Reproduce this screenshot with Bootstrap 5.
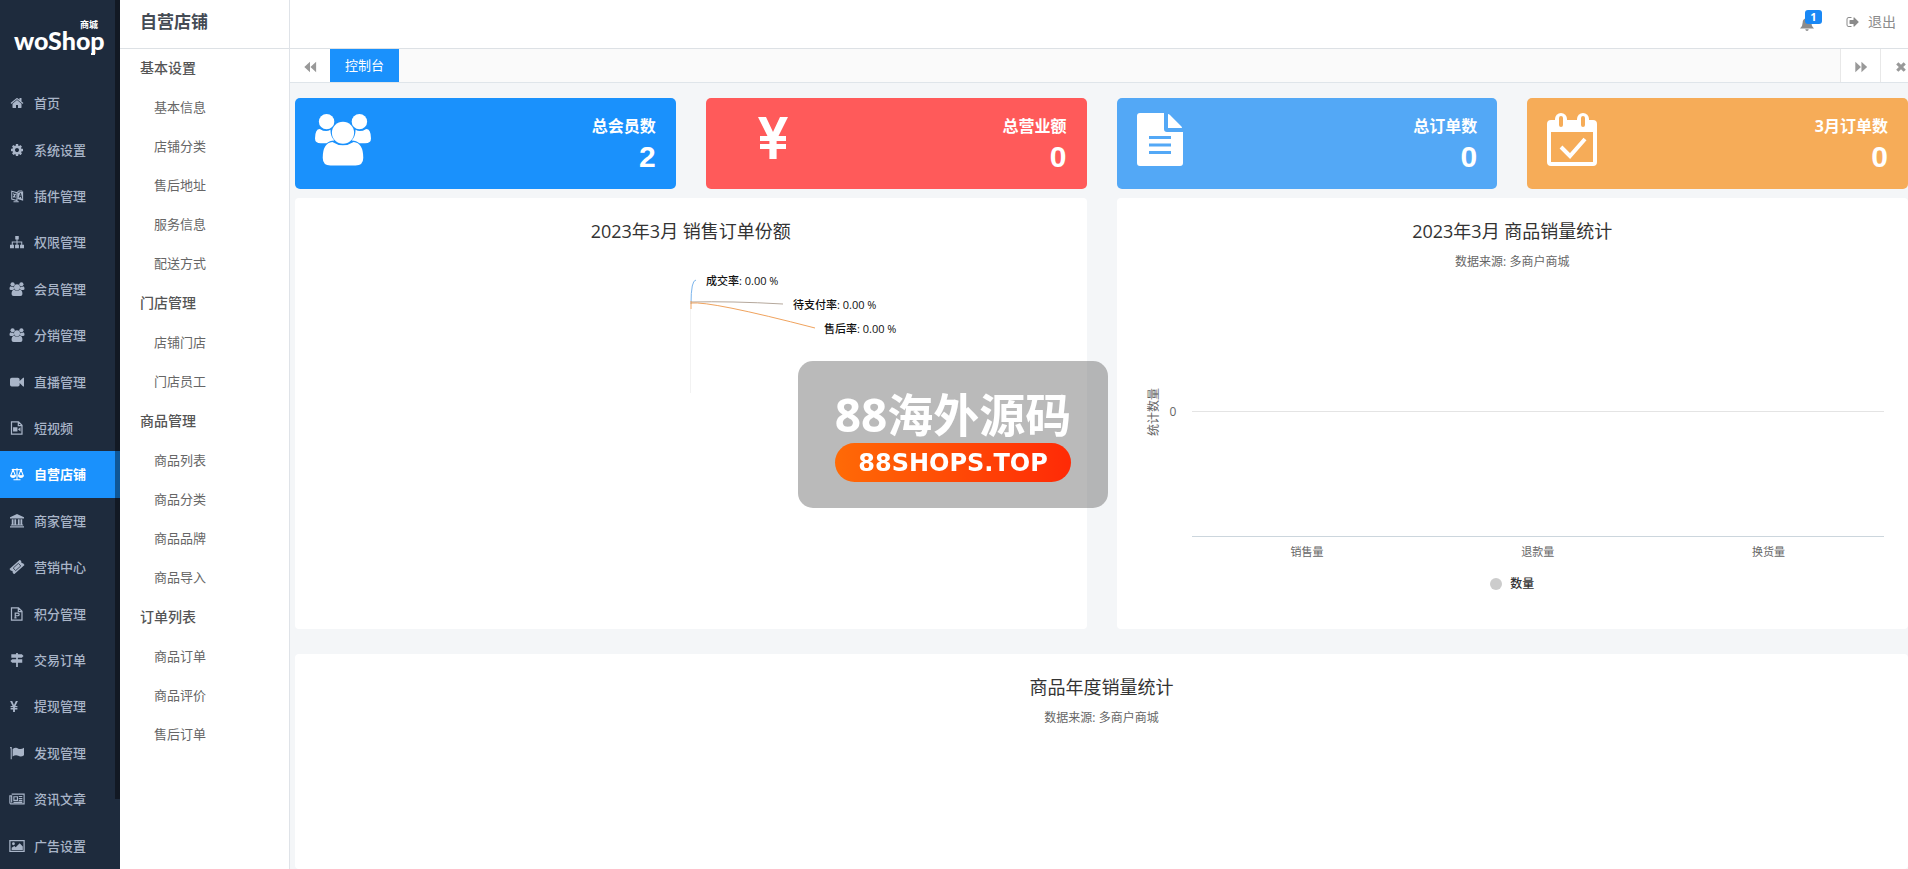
<!DOCTYPE html>
<html lang="zh-CN">
<head>
<meta charset="utf-8">
<meta name="viewport" content="width=device-width, initial-scale=1">
<title>自营店铺 - 控制台</title>
<link href="https://cdn.jsdelivr.net/npm/bootstrap@5.3.0/dist/css/bootstrap.min.css" rel="stylesheet">
<style>
body{font-family:"Open Sans","Noto Sans CJK SC",sans-serif;font-size:13px;line-height:20px;color:#666;background:#f4f6f8}
a{text-decoration:none;color:inherit}
.ico{width:14px;height:14px;fill:currentColor;flex:none}
.app-side{width:120px;background:#1e2b3d;color:#a9b5c8;font-weight:500}
.brand{height:80px;padding:20px 0 0 14px;color:#fff}
.brand-top{display:block;padding-left:66px;font:700 9px/10px "Noto Sans CJK SC",sans-serif}
.brand-name{display:block;font:900 25px/20px Lato,sans-serif}
.brand-foot{position:absolute;left:91px;top:53px;width:4px;height:2px;background:#fff}
.side-link{flex:1 1 0;min-height:40px;padding-left:9px}
.side-link .ico{width:16px;margin-right:9px}
.side-link.active{background:#1a91fc;color:#fff;font-weight:700}
.side-thumb{position:absolute;right:0;top:0;width:5px;height:92%;background:rgba(0,0,0,.4)}
.app-sub{width:170px;background:#fff;border-right:1px solid #dfe3e8}
.sub-title{height:49px;padding:8px 20px;font-size:17px;line-height:28px;font-weight:700;color:#444b54;border-bottom:1px solid #dde1e5}
.sub-head{height:40px;line-height:38px;padding-left:20px;font-size:14px;font-weight:500;color:#555}
.sub-link{height:39px;line-height:37px;padding-left:34px}
.topbar{height:49px;background:#fff;border-bottom:1px solid #dde1e5;color:#8b8b8b}
.topbar a{font-size:14px}
.bell-count{position:absolute;left:5px;top:-7px;width:17px;height:14px;border-radius:3px;background:#1a88f5;color:#fff;font-size:11px;line-height:14px;font-weight:700;text-align:center}
.tabs{height:34px;background:#fafafa;border-bottom:1px solid #dfe5ea;color:#999}
.tab-btn{width:40px;border:0;background:#fff;color:inherit;padding:0}
.tab-btn.edge{border-left:1px solid #e8e8e8}
.tab-btn.last{width:28px}
.tab-on{width:69px;background:#1a91fc;color:#fff;line-height:33px}
.content{padding:15px 0 0 5px}
.tiles{display:grid;grid-template-columns:repeat(4,1fr);gap:30px}
.tile{height:91px;padding:15px 20px;border-radius:5px;color:#fff;font-weight:700;text-align:right}
.tile svg{height:53px;fill:#fff;overflow:visible}
.tile-name{font-size:16px;line-height:26px}
.tile-num{font:700 30px/36px "Liberation Sans",sans-serif}
.blue{background:#1a91fc}.red{background:#ff5a5a}.sky{background:#53a8f6}.amber{background:#f6ac58}
.charts{display:grid;grid-template-columns:1fr 1fr;gap:30px;margin-top:9px}
.panel{background:#fff;border-radius:4px;padding-top:18px;text-align:center}
.charts .panel{height:431px}
.panel.wide{margin-top:25px;min-height:215px}
.panel h2{font-size:18px;line-height:30px;font-weight:400;color:#333;margin:0}
.note{font-size:12px;line-height:32px;margin:0}
.pie{margin-top:25px}
.pie text{font:500 11px "Open Sans","Noto Sans CJK SC",sans-serif;fill:#111}
.bars{padding:76px 24px 0 29px}
.axis-name{width:16px;writing-mode:vertical-rl;text-orientation:sideways;transform:rotate(180deg);font-size:12px;line-height:16px;height:116px;text-align:center}
.axis-zero{width:30px;line-height:116px;font-size:12px;padding-left:8px;text-align:left}
.plot{height:183px;border-bottom:1px solid #ccd6dd}
.plot-line{height:58px;border-bottom:1px solid #e4e4e4}
.cats{font-size:11px;line-height:20px;padding-top:5px}
.legend-row{font-size:12px;color:#333;font-weight:500;margin-top:12px}
.legend-dot{width:12px;height:12px;border-radius:50%;background:#ccc}
.stamp{position:fixed;left:50%;top:361px;margin-left:-156px;width:310px;height:147px;border-radius:15px;background:rgba(110,110,110,.48);color:#fff;padding-top:24px;text-align:center}
.stamp-name{font-size:46px;line-height:58px;font-weight:700}
.stamp-site{width:236px;height:39px;border-radius:20px;background:linear-gradient(90deg,#ff6a06,#ff2a06);font:700 24px/40px "DejaVu Sans",sans-serif}
</style>
</head>
<body class="overflow-hidden">
<svg class="d-none" xmlns="http://www.w3.org/2000/svg">
<symbol id="home" viewBox="0 0 1792 1792"><path d="M1472 992v480q0 26-19 45t-45 19h-384v-384h-256v384h-384q-26 0-45-19t-19-45v-480q0-1 .5-3t.5-3l575-474 575 474q1 2 1 6zm223-69l-62 74q-8 9-21 11h-3q-13 0-21-7l-692-577-692 577q-12 8-24 7-13-2-21-11l-62-74q-8-10-7-23.5t11-21.5l719-599q32-26 76-26t76 26l244 204v-195q0-14 9-23t23-9h192q14 0 23 9t9 23v408l219 182q10 8 11 21.5t-7 23.5z"/></symbol>
<symbol id="cog" viewBox="0 0 1792 1792"><path d="M1152 896q0-106-75-181t-181-75-181 75-75 181 75 181 181 75 181-75 75-181zm512-109v222q0 12-8 23t-20 13l-185 28q-19 54-39 91 35 50 107 138 10 12 10 25t-9 23q-27 37-99 108t-94 71q-12 0-26-9l-138-108q-44 23-91 38-16 136-29 186-7 28-36 28h-222q-14 0-24.5-8.5t-11.5-21.5l-28-184q-49-16-90-37l-141 107q-10 9-25 9-14 0-25-11-126-114-165-168-7-10-7-23 0-12 8-23 15-21 51-66.5t54-70.5q-27-50-41-99l-183-27q-13-2-21-12.500t-8-23.500v-222q0-12 8-23t19-13l186-28q14-46 39-92-40-57-107-138-10-12-10-24 0-10 9-23 26-36 98.500-107.500t94.500-71.500q13 0 26 10l138 107q44-23 91-38 16-136 29-186 7-28 36-28h222q14 0 24.500 8.500t11.500 21.500l28 184q49 16 90 37l142-107q9-9 24-9 13 0 25 10 129 119 165 170 7 8 7 22 0 12-8 23-15 21-51 66.500t-54 70.500q26 50 41 98l183 28q13 2 21 12.500t8 23.500z"/></symbol>
<symbol id="lang" viewBox="0 0 16 16"><path fill="none" stroke="currentColor" stroke-width="1.2" d="M2 2.500l6 1.700v9L2 11.500zM8 4.200l2-2h4M4 5l2 5M3.500 9.500L6.500 5.500M4 14.500h6"/><path d="M8.500 4.500L15 2.500v11l-6.500-2z"/><path fill="none" stroke="#1e2b3d" d="M10.500 10l1.500-5 1.500 6M11 8.500h2"/></symbol>
<symbol id="tree" viewBox="0 0 16 16"><path d="M6 1h4v4H8.600v2.400H14V11h2v4h-4.500v-4h1.300V8.600H8.600V11h1.600v4H5.800v-4h1.600V8.600H3.200V11h1.300v4H0v-4h2V7.400h5.400V5H6z"/></symbol>
<symbol id="users" viewBox="0 0 58 54"><circle cx="12" cy="8.500" r="8"/><circle cx="46" cy="8.500" r="8"/><path d="M5 16q6 4 11 1 0 7 4 11-5 0-8 3H6q-6 0-6-5 0-10 5-10zM53 16q-6 4-11 1 0 7-4 11 5 0 8 3h6q6 0 6-5 0-10-5-10z"/><circle cx="29" cy="20" r="11.500"/><path d="M18 29.500q11 7 22 0 10 1 10 16.500 0 8-8 8H16q-8 0-8-8 0-15.500 10-16.500z"/></symbol>
<symbol id="video" viewBox="0 0 16 16"><path d="M2 3h7q2 0 2 2v1.800L15 3h1v10h-1l-4-3.800V11q0 2-2 2H2q-2 0-2-2V5q0-2 2-2z"/></symbol>
<symbol id="fvideo" viewBox="0 0 16 16"><path fill="none" stroke="currentColor" stroke-width="1.400" d="M1.700 1h8l4 4v10h-12zM9.500 1v4.300h4"/><path d="M3.500 7h5v5h-5zM9 9.500L12 7v5z"/></symbol>
<symbol id="scale" viewBox="0 0 16 16"><path fill="none" stroke="currentColor" stroke-width="1.200" d="M2 3h12M8 1v13M4 14.500h8M3.500 3L.8 10h5.400zM12.500 3L9.800 10h5.400z"/><path d="M0 10h7q-1 2.500-3.500 2.500T0 10zM9 10h7q-1 2.500-3.500 2.500T9 10z"/></symbol>
<symbol id="bank" viewBox="0 0 16 16"><path d="M8 0l8 3.700V5H0V3.700zM2 6h2v6h1V6h2v6h2V6h2v6h1V6h2v6h1v1H1v-1h1zM0 14h16v1.500H0z"/></symbol>
<symbol id="ticket" viewBox="0 0 16 16"><g transform="rotate(-42 8 8)"><path d="M0 4h16v2.500q-2 1.500 0 3V12H0V9.500q2-1.500 0-3z"/><path fill="none" stroke="#1e2b3d" stroke-width=".8" d="M4 6h8v4H4z"/></g></symbol>
<symbol id="fileb" viewBox="0 0 16 16"><path fill="none" stroke="currentColor" stroke-width="1.400" d="M1.700 1h8l4 4v10h-12zM9.500 1v4.300h4M6 12.500V7h2.500q2 0 2 1.500t-2 1.500H6M5 12.500h2.500"/></symbol>
<symbol id="signs" viewBox="0 0 16 16"><path d="M7 0h2v1.500h4.500L15.500 3.500l-2 2H9V7h5v4H9v5H7v-5H2.500L.5 9l2-2H7V5.500H1.500v-4H7z"/></symbol>
<symbol id="yen" viewBox="0 0 30 42"><path d="M0 0h8l7 15 7-15h8L20.500 19H28v5H18.600v3H28v5h-9.400v10h-7.200V32H2v-5h9.400v-3H2v-5h7.500z"/></symbol>
<symbol id="flag" viewBox="0 0 16 16"><path d="M0 1h2v14H.8V3Q0 2 0 1zM3 3.500q3.500-2.500 6.500-.5 3 1.500 6.500-1v8.500q-3.500 2.500-6.500.7Q6.500 9.500 3 12z"/></symbol>
<symbol id="news" viewBox="0 0 18 14"><path fill="none" stroke="currentColor" stroke-width="1.300" d="M3 1.500h14v11H2.500Q1 12.500 1 11V3.500h2v7.500M5.500 4.500h4v4h-4zM11 4.200h4M11 6.500h4M11 8.800h4M5 10.800h10"/></symbol>
<symbol id="pic" viewBox="0 0 18 14"><path fill="none" stroke="currentColor" stroke-width="1.400" d="M1 1h16v12H1z"/><circle cx="5" cy="4.500" r="1.600"/><path d="M3 11.500V9l3-2 1.500 1.500L12 4l3.500 3.500v4z"/></symbol>
<symbol id="out" viewBox="0 0 1792 1792"><path d="M704 1440q0 4 1 20t.5 26.500-3 23.500-10 19.500-20.500 6.500h-320q-119 0-203.500-84.500t-84.500-203.500v-704q0-119 84.500-203.500t203.500-84.500h320q13 0 22.500 9.500t9.500 22.500q0 4 1 20t.5 26.500-3 23.500-10 19.500-20.500 6.500h-320q-66 0-113 47t-47 113v704q0 66 47 113t113 47h312l11.500 1 11.500 3 8 5.500 7 9 2 13.500zm928-544q0 26-19 45l-544 544q-19 19-45 19t-45-19-19-45v-288h-448q-26 0-45-19t-19-45v-384q0-26 19-45t45-19h448v-288q0-26 19-45t45-19 45 19l544 544q19 19 19 45z"/></symbol>
<symbol id="bell" viewBox="0 0 16 16"><path d="M7 0h2v1.500q4 .8 4 5 0 4.500 3 6.500H0q3-2 3-6.500 0-4.200 4-5zM6 14h4q-.3 2-2 2t-2-2z"/></symbol>
<symbol id="back" viewBox="0 0 16 16"><path d="M8 2v12L1.500 8zM15 2v12L8.500 8z"/></symbol>
<symbol id="fwd" viewBox="0 0 16 16"><path d="M1.500 2v12L8 8zM8.500 2v12L15 8z"/></symbol>
<symbol id="times" viewBox="0 0 16 16"><path d="M5 2.500l3 3 3-3L13.500 5l-3 3 3 3-2.500 2.500-3-3-3 3L2.500 11l3-3-3-3z"/></symbol>
</svg>

<div class="d-flex vh-100">
  <aside class="app-side d-flex flex-column flex-shrink-0 position-relative">
    <a class="brand d-block flex-shrink-0" href="#"><span class="brand-top">商城</span><span class="brand-name">woShop</span><span class="brand-foot"></span></a>
    <nav class="d-flex flex-column flex-grow-1">
      <a class="side-link d-flex align-items-center" href="#"><svg class="ico"><use href="#home"/></svg>首页</a>
      <a class="side-link d-flex align-items-center" href="#"><svg class="ico"><use href="#cog"/></svg>系统设置</a>
      <a class="side-link d-flex align-items-center" href="#"><svg class="ico"><use href="#lang"/></svg>插件管理</a>
      <a class="side-link d-flex align-items-center" href="#"><svg class="ico"><use href="#tree"/></svg>权限管理</a>
      <a class="side-link d-flex align-items-center" href="#"><svg class="ico"><use href="#users"/></svg>会员管理</a>
      <a class="side-link d-flex align-items-center" href="#"><svg class="ico"><use href="#users"/></svg>分销管理</a>
      <a class="side-link d-flex align-items-center" href="#"><svg class="ico"><use href="#video"/></svg>直播管理</a>
      <a class="side-link d-flex align-items-center" href="#"><svg class="ico"><use href="#fvideo"/></svg>短视频</a>
      <a class="side-link d-flex align-items-center active" href="#"><svg class="ico"><use href="#scale"/></svg>自营店铺</a>
      <a class="side-link d-flex align-items-center" href="#"><svg class="ico"><use href="#bank"/></svg>商家管理</a>
      <a class="side-link d-flex align-items-center" href="#"><svg class="ico"><use href="#ticket"/></svg>营销中心</a>
      <a class="side-link d-flex align-items-center" href="#"><svg class="ico"><use href="#fileb"/></svg>积分管理</a>
      <a class="side-link d-flex align-items-center" href="#"><svg class="ico"><use href="#signs"/></svg>交易订单</a>
      <a class="side-link d-flex align-items-center" href="#"><svg class="ico" viewBox="0 0 16 14"><use href="#yen" x="1" y="2" width="8" height="11"/></svg>提现管理</a>
      <a class="side-link d-flex align-items-center" href="#"><svg class="ico"><use href="#flag"/></svg>发现管理</a>
      <a class="side-link d-flex align-items-center" href="#"><svg class="ico"><use href="#news"/></svg>资讯文章</a>
      <a class="side-link d-flex align-items-center" href="#"><svg class="ico"><use href="#pic"/></svg>广告设置</a>
    </nav>
    <div class="side-thumb"></div>
  </aside>

  <aside class="app-sub flex-shrink-0">
    <div class="sub-title">自营店铺</div>
    <nav>
      <div class="sub-head">基本设置</div>
      <a class="sub-link d-block" href="#">基本信息</a>
      <a class="sub-link d-block" href="#">店铺分类</a>
      <a class="sub-link d-block" href="#">售后地址</a>
      <a class="sub-link d-block" href="#">服务信息</a>
      <a class="sub-link d-block" href="#">配送方式</a>
      <div class="sub-head">门店管理</div>
      <a class="sub-link d-block" href="#">店铺门店</a>
      <a class="sub-link d-block" href="#">门店员工</a>
      <div class="sub-head">商品管理</div>
      <a class="sub-link d-block" href="#">商品列表</a>
      <a class="sub-link d-block" href="#">商品分类</a>
      <a class="sub-link d-block" href="#">商品品牌</a>
      <a class="sub-link d-block" href="#">商品导入</a>
      <div class="sub-head">订单列表</div>
      <a class="sub-link d-block" href="#">商品订单</a>
      <a class="sub-link d-block" href="#">商品评价</a>
      <a class="sub-link d-block" href="#">售后订单</a>
    </nav>
  </aside>

  <div class="flex-grow-1">
    <header class="topbar d-flex justify-content-end align-items-center gap-4 pe-2">
      <a class="position-relative d-flex me-2" href="#" aria-label="消息"><svg class="ico"><use href="#bell"/></svg><span class="bell-count">1</span></a>
      <a class="d-flex align-items-center gap-2 pb-1 pe-1" href="#"><svg class="ico"><use href="#out"/></svg>退出</a>
    </header>
    <div class="tabs d-flex">
      <button class="tab-btn" aria-label="向左"><svg class="ico"><use href="#back"/></svg></button>
      <a class="tab-on text-center" href="#">控制台</a>
      <button class="tab-btn edge ms-auto" aria-label="向右"><svg class="ico"><use href="#fwd"/></svg></button>
      <button class="tab-btn edge last text-end" aria-label="关闭"><svg class="ico"><use href="#times"/></svg></button>
    </div>
    <main class="content">
      <section class="tiles">
        <div class="tile blue d-flex justify-content-between"><svg width="56"><use href="#users"/></svg><div><div class="tile-name">总会员数</div><div class="tile-num">2</div></div></div>
        <div class="tile red d-flex justify-content-between"><svg width="94" viewBox="0 0 94 53"><use href="#yen" x="32" y="4" width="30" height="42"/></svg><div><div class="tile-name">总营业额</div><div class="tile-num">0</div></div></div>
        <div class="tile sky d-flex justify-content-between"><svg width="46" viewBox="0 0 46 53"><path d="M3 0h24v16q0 3 3 3h16v31q0 3-3 3H3q-3 0-3-3V3q0-3 3-3zM31 1q1 0 2 1l11 11q1 1 1 2H31z"/><path d="M12 24.500h22M12 32h22M12 39.500h22" stroke="#53a8f6" stroke-width="3"/></svg><div><div class="tile-name">总订单数</div><div class="tile-num">0</div></div></div>
        <div class="tile amber d-flex justify-content-between"><svg width="50" viewBox="0 0 50 53"><path fill-rule="evenodd" d="M4 7h42q4 0 4 4v38q0 4-4 4H4q-4 0-4-4V11q0-4 4-4zm0 12v30h42V19z"/><rect x="8" y="0" width="12" height="15" rx="6"/><rect x="30" y="0" width="12" height="15" rx="6"/><path d="M14 5v7M36 5v7" stroke="#f6ac58" stroke-width="4" stroke-linecap="round"/><path d="M14 34l9 9 15-17" fill="none" stroke="#fff" stroke-width="4"/></svg><div><div class="tile-name">3月订单数</div><div class="tile-num">0</div></div></div>
      </section>
      <section class="charts">
        <div class="panel">
          <h2>2023年3月 销售订单份额</h2>
          <svg class="pie" width="440" height="130" fill="none">
            <path d="M220 33q0-24 5-24" stroke="#7cb5ec"/><path d="M220 31q40-1 92 2" stroke="#b5a89c"/><path d="M220 32q20-2 124 25" stroke="#f0a35e"/><path d="M220 30v8" stroke="#f0a35e"/><path d="M219.500 38v84" stroke="#f2f2f2"/>
            <text x="235" y="14">成交率: 0.00 %</text><text x="322" y="38">待支付率: 0.00 %</text><text x="353" y="62">售后率: 0.00 %</text>
          </svg>
        </div>
        <div class="panel">
          <h2>2023年3月 商品销量统计</h2>
          <p class="note">数据来源: 多商户商城</p>
          <div class="bars d-flex">
            <div class="axis-name">统计数量</div>
            <div class="axis-zero">0</div>
            <div class="flex-grow-1">
              <div class="plot"><div class="plot-line"></div></div>
              <div class="cats row g-0"><span class="col">销售量</span><span class="col">退款量</span><span class="col">换货量</span></div>
            </div>
          </div>
          <div class="legend-row d-flex justify-content-center align-items-center gap-2"><span class="legend-dot"></span>数量</div>
        </div>
      </section>
      <section class="panel wide">
        <h2>商品年度销量统计</h2>
        <p class="note">数据来源: 多商户商城</p>
      </section>
    </main>
  </div>
</div>
<div class="stamp">
  <div class="stamp-name">88海外源码</div>
  <div class="stamp-site mx-auto">88SHOPS.TOP</div>
</div>
<script src="https://cdn.jsdelivr.net/npm/bootstrap@5.3.0/dist/js/bootstrap.bundle.min.js"></script>
</body>
</html>
